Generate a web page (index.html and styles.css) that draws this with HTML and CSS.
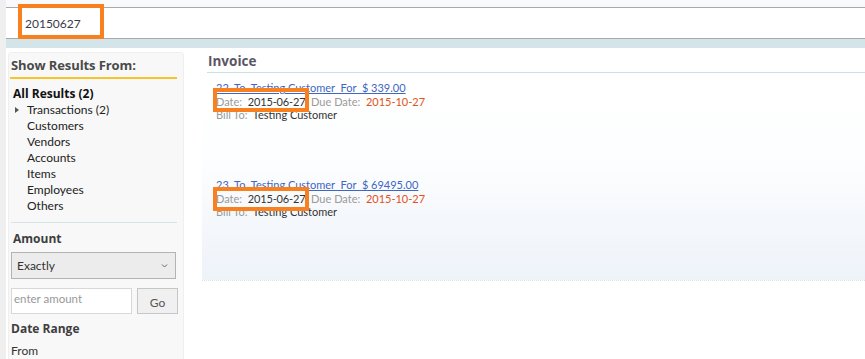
FILE: index.html
```html
<!DOCTYPE html>
<html>
<head>
<meta charset="utf-8">
<link rel="stylesheet" href="styles.css">
</head>
<body>
<div class="page">
  <div class="topbar">
    <div class="search"><span class="search-text">20150627</span></div>
  </div>
  <div class="band"></div>
  <div class="main">
    <aside class="side">
      <div class="side-title">Show Results From:</div>
      <ul class="filters">
        <li class="all">All Results (2)</li>
        <li class="exp"><span class="tri"></span>Transactions (2)</li>
        <li>Customers</li>
        <li>Vendors</li>
        <li>Accounts</li>
        <li>Items</li>
        <li>Employees</li>
        <li>Others</li>
      </ul>
      <div class="sep"></div>
      <div class="sec-title">Amount</div>
      <div class="select"><span>Exactly</span><svg class="chev" width="7" height="5" viewBox="0 0 7 5"><path d="M1 1.5 L3.5 4 L6 1.5" fill="none" stroke="#666" stroke-width="1"/></svg></div>
      <div class="amount-row">
        <div class="amount-input">enter amount</div>
        <div class="go">Go</div>
      </div>
      <div class="sec-title dr">Date Range</div>
      <div class="from">From</div>
    </aside>
    <section class="content">
      <div class="heading">Invoice</div>
      <div class="results">
        <div class="rec">
          <div class="l1"><a>22&nbsp; To&nbsp; Testing Customer&nbsp; For&nbsp; $ 339.00</a></div>
          <div class="l2"><span class="lbl">Date:</span>&nbsp; <span class="val">2015-06-27</span>&nbsp;&nbsp;<span class="lbl">Due Date:</span>&nbsp; <span class="due">2015-10-27</span></div>
          <div class="l3"><span class="lbl">Bill To:</span>&nbsp; <span class="val">Testing Customer</span></div>
        </div>
        <div class="rec">
          <div class="l1"><a>23&nbsp; To&nbsp; Testing Customer&nbsp; For&nbsp; $ 69495.00</a></div>
          <div class="l2"><span class="lbl">Date:</span>&nbsp; <span class="val">2015-06-27</span>&nbsp;&nbsp;<span class="lbl">Due Date:</span>&nbsp; <span class="due">2015-10-27</span></div>
          <div class="l3"><span class="lbl">Bill To:</span>&nbsp; <span class="val">Testing Customer</span></div>
        </div>
      </div>
    </section>
  </div>
  <div class="mark m1"></div>
  <div class="mark m2"></div>
  <div class="mark m3"></div>
</div>
</body>
</html>
```
FILE: styles.css
```css
* { box-sizing: border-box; }
html, body { margin: 0; padding: 0; }
body {
  width: 865px; height: 359px; overflow: hidden;
  background: #fff;
  font-family: "Lato", "Open Sans", sans-serif;
  font-size: 12px; color: #333;
}
.page { position: relative; height: 359px; border-left: 6px solid #efefef; }
.topbar {
  height: 39px; padding-top: 7px;
  background: linear-gradient(#f8fafc, #eef3f6);
}
.search {
  height: 32px; background: #fff;
  border-top: 1px solid #a9a9a9; border-bottom: 1px solid #a9a9a9;
  padding: 8px 0 0 19px;
}
.search-text { font-size: 12px; color: #3a3a4a; }
.band { height: 9px; background: #d3e5e8; }
.main { display: flex; padding-top: 4px; }
.side {
  width: 176px; margin-left: 2px; height: 320px;
  background: #f8f8f8; border: 1px solid #efefef; border-radius: 3px;
  padding: 3px 0 0 1px;
}
.side-title {
  font-family: "Open Sans", sans-serif;
  font-weight: bold; font-size: 13px; color: #4a4a4a; letter-spacing: -0.1px;
  width: 167px; padding: 0 0 3px 1px; border-bottom: 2px solid #f7c52b;
}
.filters { list-style: none; margin: 0; padding: 7px 0 0 3px; }
.filters li { line-height: 16px; padding-left: 14px; color: #222; position: relative; }
.filters li.all {
  padding-left: 0; font-family: "Open Sans", sans-serif; font-weight: bold; font-size: 12px; color: #111;
}
.tri {
  position: absolute; left: 2px; top: 5px;
  border-left: 4px solid #555; border-top: 3.5px solid transparent; border-bottom: 3.5px solid transparent;
}
.sep { width: 166px; height: 1px; background: #d6e4e8; margin: 8px 0 0 1px; }
.sec-title {
  font-family: "Open Sans", sans-serif;
  font-weight: bold; font-size: 12px; color: #3e3e3e; margin: 7px 0 0 3px;
}
.select {
  width: 165px; height: 27px; margin: 5px 0 0 1px;
  background: #ececec; border: 1px solid #b3b3b3;
  display: flex; align-items: center; justify-content: space-between;
  padding: 0 7px 0 5px; font-size: 12px; color: #333;
}
.amount-row { display: flex; gap: 5px; margin: 9px 0 0 1px; }
.amount-input {
  width: 121px; height: 26px; background: #fff; border: 1px solid #d8d8d8;
  padding: 3px 0 0 2px; color: #999; font-size: 11.5px;
}
.go {
  width: 41px; height: 26px; background: #f0f0f0; border: 1px solid #c6c6c6;
  display: flex; align-items: center; justify-content: center; padding-top: 3px; color: #555;
}
.sec-title.dr { margin: 6px 0 0 1px; }
.from { margin: 6px 0 0 1px; color: #333; }
.content { flex: 1; margin-left: 18px; }
.heading {
  font-family: "Open Sans", sans-serif;
  font-weight: bold; font-size: 13.5px; color: #5b5566;
  padding: 0 0 2px 1px; border-bottom: 1px solid #c9e0e5; margin-left: 5px;
}
.results {
  height: 208px;
  background: linear-gradient(#ffffff 0%, #fdfeff 40%, #f4f7fb 75%, #eef3fa 100%);
  border-bottom: 1px dotted #dde3ea;
  padding: 8px 0 0 14px;
}
.rec { font-size: 11px; line-height: 13.5px; height: 97px; }
.l1 a { color: #3e66c2; text-decoration: underline; }
.l2 .val { letter-spacing: -0.15px; }
.lbl { color: #9a9a9a; }
.val { color: #333; }
.due { color: #e05220; }
.mark { position: absolute; border: 4px solid #f9801f; }
.m1 { left: 12px; top: 4px; width: 86px; height: 35px; }
.m2 { left: 207px; top: 88px; width: 96px; height: 24px; }
.m3 { left: 207px; top: 187px; width: 96px; height: 24px; }
```
